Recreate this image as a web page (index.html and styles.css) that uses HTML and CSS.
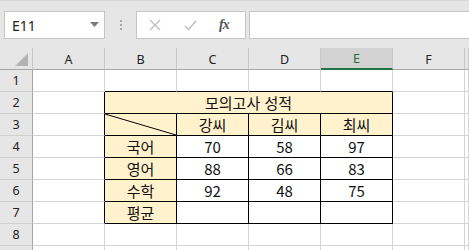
FILE: index.html
```html
<!DOCTYPE html>
<html lang="ko">
<head>
    <meta charset="UTF-8">
    <title>모의고사 성적</title>
    <link rel="stylesheet" href="styles.css">
</head>
<body>
    <div class="toolbar">
        <div class="namebox">
            <span>E11</span>
            <svg class="caret" width="9" height="5" viewBox="0 0 9 5"><path d="M0 0H9L4.5 5Z" fill="#7a7a7a"/></svg>
        </div>
        <div class="grip"><i></i><i></i><i></i></div>
        <div class="fxbox">
            <svg width="12" height="12" viewBox="0 0 12 12"><path d="M1 1L11 11M11 1L1 11" stroke="#bdbdbd" stroke-width="1.3"/></svg>
            <svg width="13" height="11" viewBox="0 0 13 11"><path d="M1 6L4.5 9.5L12 1" stroke="#bdbdbd" stroke-width="1.5" fill="none"/></svg>
            <span class="fx">fx</span>
        </div>
        <div class="formula"></div>
    </div>

    <div class="sheet">
        <div class="hd corner"><span class="tri"></span></div>
        <div class="hd col">A</div>
        <div class="hd col">B</div>
        <div class="hd col">C</div>
        <div class="hd col">D</div>
        <div class="hd col sel">E</div>
        <div class="hd col">F</div>
        <div class="hd col"></div>

        <div class="hd row">1</div>
        <div class="c"></div><div class="c top"></div><div class="c top"></div><div class="c top"></div><div class="c top"></div><div class="c"></div><div class="c"></div>

        <div class="hd row">2</div>
        <div class="c left"></div><div class="c t fill title">모의고사 성적</div><div class="c"></div><div class="c"></div>

        <div class="hd row">3</div>
        <div class="c left"></div>
        <div class="c t fill diag"><svg viewBox="0 0 71 21" preserveAspectRatio="none"><line x1="0" y1="0" x2="71" y2="21" stroke="#000" stroke-width="1"/></svg></div>
        <div class="c t fill">강씨</div><div class="c t fill">김씨</div><div class="c t fill">최씨</div>
        <div class="c"></div><div class="c"></div>

        <div class="hd row">4</div>
        <div class="c left"></div>
        <div class="c t fill">국어</div><div class="c t">70</div><div class="c t">58</div><div class="c t">97</div>
        <div class="c"></div><div class="c"></div>

        <div class="hd row">5</div>
        <div class="c left"></div>
        <div class="c t fill">영어</div><div class="c t">88</div><div class="c t">66</div><div class="c t">83</div>
        <div class="c"></div><div class="c"></div>

        <div class="hd row">6</div>
        <div class="c left"></div>
        <div class="c t fill">수학</div><div class="c t">92</div><div class="c t">48</div><div class="c t">75</div>
        <div class="c"></div><div class="c"></div>

        <div class="hd row">7</div>
        <div class="c left"></div>
        <div class="c t fill">평균</div><div class="c t"></div><div class="c t"></div><div class="c t"></div>
        <div class="c"></div><div class="c"></div>

        <div class="hd row">8</div>
        <div class="c"></div><div class="c"></div><div class="c"></div><div class="c"></div><div class="c"></div><div class="c"></div><div class="c"></div>

        <div class="hd row"></div>
        <div class="c"></div><div class="c"></div><div class="c"></div><div class="c"></div><div class="c"></div><div class="c"></div><div class="c"></div>
    </div>
</body>
</html>
```

FILE: styles.css
```css
body {
    margin: 0;
    width: 469px;
    height: 250px;
    overflow: hidden;
    background: #fff;
    font-family: "Noto Sans", "Noto Sans CJK KR", sans-serif;
}
.toolbar {
    height: 48px;
    background: #e6e6e6;
    border-top: 1px solid #d6d6d6;
    box-sizing: border-box;
    display: flex;
    align-items: flex-start;
    padding-top: 10px;
    padding-left: 4px;
}
.namebox {
    width: 101px;
    height: 28px;
    box-sizing: border-box;
    background: #fff;
    border: 1px solid #c6c6c6;
    display: flex;
    align-items: center;
    justify-content: space-between;
    padding: 0 5px 0 7px;
    font-size: 14px;
    color: #222;
}
.caret {
    margin-top: -1px;
}
.grip {
    width: 31px;
    height: 28px;
    display: flex;
    flex-direction: column;
    align-items: center;
    justify-content: center;
    gap: 2px;
}
.grip i {
    width: 2px;
    height: 2px;
    background: #a8a8a8;
}
.fxbox {
    width: 110px;
    height: 28px;
    box-sizing: border-box;
    background: #fff;
    border: 1px solid #c6c6c6;
    display: flex;
    align-items: center;
    padding-left: 12px;
}
.fxbox svg:first-child {
    margin-right: 23px;
}
.fxbox svg:nth-child(2) {
    margin-right: 22px;
}
.fx {
    font-family: "Liberation Serif", serif;
    font-style: italic;
    font-weight: bold;
    font-size: 14px;
    color: #555;
    letter-spacing: -1px;
}
.formula {
    flex: 1;
    height: 28px;
    margin-left: 3px;
    box-sizing: border-box;
    background: #fff;
    border: 1px solid #c6c6c6;
    border-right: none;
}
.sheet {
    display: grid;
    grid-template-columns: 33px repeat(6, 72px) 1fr;
    grid-template-rows: repeat(10, 22px);
}
.hd {
    background: #e6e6e6;
    box-sizing: border-box;
    display: flex;
    align-items: center;
    justify-content: center;
    font-size: 12.5px;
    color: #222;
}
.col {
    border-right: 1px solid #c8c8c8;
    border-bottom: 1px solid #a6a6a6;
    padding-top: 1px;
}
.col.sel {
    background: #d2d2d2;
    color: #1e6b41;
    border-bottom: 2px solid #217346;
}
.corner {
    border-right: 1px solid #c8c8c8;
    border-bottom: 1px solid #a6a6a6;
    position: relative;
}
.tri {
    position: absolute;
    right: 4px;
    bottom: 3px;
    width: 0;
    height: 0;
    border-left: 13px solid transparent;
    border-bottom: 13px solid #b4b4b4;
}
.row {
    border-right: 1px solid #a6a6a6;
    border-bottom: 1px solid #d0d0d0;
}
.c {
    box-sizing: border-box;
    border-right: 1px solid #d4d4d4;
    border-bottom: 1px solid #d4d4d4;
    display: flex;
    align-items: center;
    justify-content: center;
    font-family: "Noto Sans CJK KR", sans-serif;
    font-size: 15px;
    line-height: 1;
    color: #111;
}
.c.top {
    border-bottom-color: #000;
}
.c.left {
    border-right-color: #000;
}
.c.t {
    border-right-color: #000;
    border-bottom-color: #000;
}
.fill {
    background: #fff2cc;
}
.title {
    grid-column: span 4;
}
.diag svg {
    width: 100%;
    height: 100%;
    display: block;
}
```
